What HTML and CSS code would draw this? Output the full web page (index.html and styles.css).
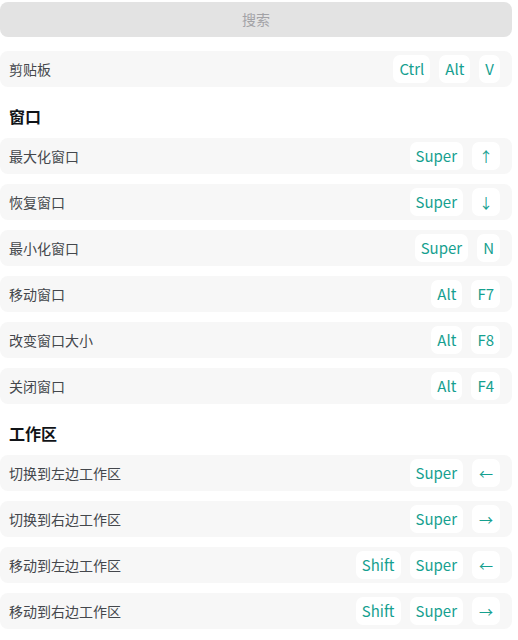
FILE: index.html
```html
<!DOCTYPE html>
<html lang="zh">
<head>
<meta charset="utf-8">
<link rel="stylesheet" href="styles.css">
</head>
<body>
<div class="page">
  <div class="search">搜索</div>
  <div class="list">
    <div class="row"><span class="label">剪贴板</span><span class="keys"><span class="key">Ctrl</span><span class="key">Alt</span><span class="key">V</span></span></div>
  </div>
  <div class="heading">窗口</div>
  <div class="list">
    <div class="row"><span class="label">最大化窗口</span><span class="keys"><span class="key">Super</span><span class="key arrow">↑</span></span></div>
    <div class="row"><span class="label">恢复窗口</span><span class="keys"><span class="key">Super</span><span class="key arrow">↓</span></span></div>
    <div class="row"><span class="label">最小化窗口</span><span class="keys"><span class="key">Super</span><span class="key">N</span></span></div>
    <div class="row"><span class="label">移动窗口</span><span class="keys"><span class="key">Alt</span><span class="key">F7</span></span></div>
    <div class="row"><span class="label">改变窗口大小</span><span class="keys"><span class="key">Alt</span><span class="key">F8</span></span></div>
    <div class="row"><span class="label">关闭窗口</span><span class="keys"><span class="key">Alt</span><span class="key">F4</span></span></div>
  </div>
  <div class="heading">工作区</div>
  <div class="list">
    <div class="row"><span class="label">切换到左边工作区</span><span class="keys"><span class="key">Super</span><span class="key arrow">←</span></span></div>
    <div class="row"><span class="label">切换到右边工作区</span><span class="keys"><span class="key">Super</span><span class="key arrow">→</span></span></div>
    <div class="row"><span class="label">移动到左边工作区</span><span class="keys"><span class="key">Shift</span><span class="key">Super</span><span class="key arrow">←</span></span></div>
    <div class="row"><span class="label">移动到右边工作区</span><span class="keys"><span class="key">Shift</span><span class="key">Super</span><span class="key arrow">→</span></span></div>
  </div>
</div>
</body>
</html>
```

FILE: styles.css
```css
html, body {
  margin: 0;
  padding: 0;
  background: #ffffff;
}
body {
  font-family: "Noto Sans CJK SC", "Noto Sans", sans-serif;
  overflow: hidden;
}
.page {
  width: 512px;
  padding-top: 2px;
}
.search {
  height: 35px;
  line-height: 35px;
  background: #e3e3e3;
  border-radius: 8px;
  text-align: center;
  font-size: 14px;
  color: #a2a2a6;
  margin-bottom: 14px;
}
.list {
  display: flex;
  flex-direction: column;
  gap: 10px;
}
.row {
  height: 36px;
  background: #f7f7f7;
  border-radius: 8px;
  display: flex;
  align-items: center;
  justify-content: space-between;
  padding: 0 12px 0 9px;
}
.label {
  font-size: 14px;
  color: #44474c;
}
.keys {
  display: flex;
  gap: 9px;
}
.key {
  height: 28px;
  box-sizing: border-box;
  padding: 0 6px 1px;
  background: #ffffff;
  border-radius: 7px;
  display: flex;
  align-items: center;
  justify-content: center;
  font-size: 15px;
  color: #16a08f;
}
.key.arrow {
  width: 28px;
  padding: 0 0 1px;
  font-size: 14px;
}
.heading {
  margin-top: 10px;
  padding: 8px 9px 1px;
  line-height: 22px;
  height: 22px;
  font-size: 16px;
  font-weight: bold;
  color: #111418;
  margin-bottom: 10px;
}
```
